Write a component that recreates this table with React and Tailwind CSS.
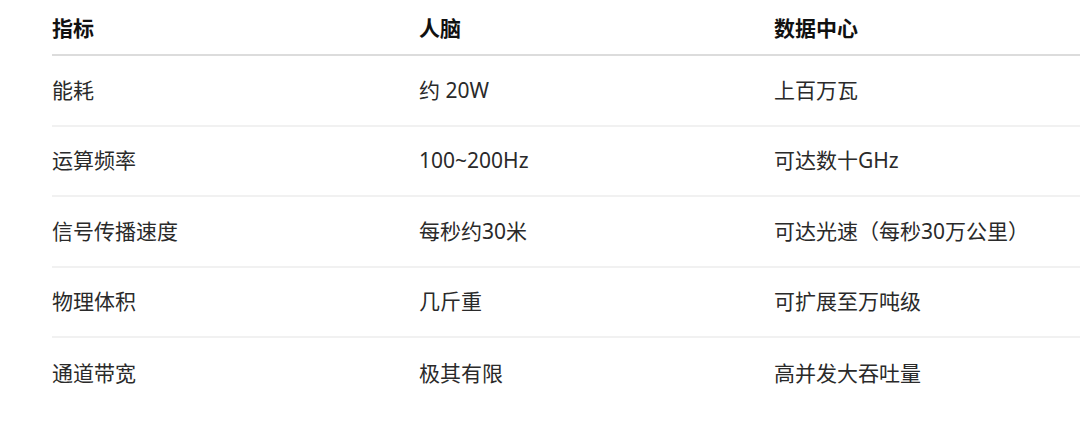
import React from 'react';

const rows = [
  ['能耗', '约 20W', '上百万瓦'],
  ['运算频率', '100~200Hz', '可达数十GHz'],
  ['信号传播速度', '每秒约30米', '可达光速（每秒30万公里）'],
  ['物理体积', '几斤重', '可扩展至万吨级'],
  ['通道带宽', '极其有限', '高并发大吞吐量'],
];

const App = () => {
  return (
    <div
      className="w-[1080px] h-[423px] bg-white overflow-hidden pl-[52px]"
      style={{ fontFamily: '"Noto Sans", "Noto Sans CJK SC", sans-serif' }}
    >
      <div className="w-[1100px]">
        <div className="grid grid-cols-[367px_355px_1fr] h-[56px] items-center border-b-2 border-[#dcdcdc] text-[21px] font-bold text-[#111] pt-[4px]">
          <div>指标</div>
          <div>人脑</div>
          <div>数据中心</div>
        </div>
        {rows.map((r, i) => (
          <div
            key={i}
            className={`grid grid-cols-[367px_355px_1fr] h-[70.5px] items-center text-[21px] text-[#2a2a2a] ${i < rows.length - 1 ? 'border-b-2 border-[#f1f1f1]' : ''}`}
          >
            <div>{r[0]}</div>
            <div>{r[1]}</div>
            <div>{r[2]}</div>
          </div>
        ))}
      </div>
    </div>
  );
};

export default App;
